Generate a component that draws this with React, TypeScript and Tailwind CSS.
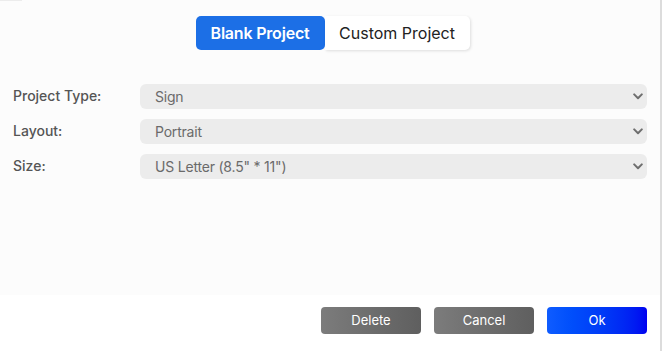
import React from 'react';

const fields = [
    { label: 'Project Type:', value: 'Sign' },
    { label: 'Layout:', value: 'Portrait' },
    { label: 'Size:', value: 'US Letter (8.5" * 11")' },
];

const Chevron = () => (
    <svg width="10" height="7" viewBox="0 0 10 7" className="text-[#6e6e6e]">
        <path d="M1.2 1.4 L5 5.2 L8.8 1.4" fill="none" stroke="currentColor" strokeWidth="2" strokeLinecap="round" strokeLinejoin="round" />
    </svg>
);

export default function App() {
    return (
        <div className="w-[662px] h-[351px] flex bg-white" style={{ fontFamily: 'Inter, "Open Sans", sans-serif' }}>
            <div className="flex-1 flex flex-col">
                <div className="h-[295px] bg-[#fcfcfc] flex flex-col">
                    <div className="h-px w-[22px] bg-[#ececec]" />
                    <div className="flex justify-center pt-[15px] pl-[5px]">
                        <div className="flex">
                            <button className="w-[129px] h-[34px] rounded-[5px] bg-[#1c6fe6] text-white text-[16px] font-semibold tracking-[-0.2px]">
                                Blank Project
                            </button>
                            <button className="w-[145px] h-[34px] rounded-r-[5px] bg-white text-[#222] text-[16px] shadow-[1px_1px_3px_rgba(0,0,0,0.12)]">
                                Custom Project
                            </button>
                        </div>
                    </div>
                    <div className="flex flex-col gap-[10px] mt-[34px] pl-[13px] pr-[13px]">
                        {fields.map((f) => (
                            <div key={f.label} className="flex items-center">
                                <div className="w-[127px] text-[14px] font-medium text-[#555] -mt-[3px]">{f.label}</div>
                                <div className="flex-1 h-[25px] rounded-[6px] bg-[#ececec] flex items-center justify-between pl-[15px] pr-[4px]">
                                    <span className="text-[14px] text-[#6a6a6a] tracking-[-0.2px]">{f.value}</span>
                                    <Chevron />
                                </div>
                            </div>
                        ))}
                    </div>
                </div>
                <div className="flex justify-end gap-[13px] pt-[12px] pr-[13px]">
                    <button className="w-[100px] h-[27px] rounded-[4px] bg-gradient-to-r from-[#7c7c7c] to-[#5f5f5f] text-white text-[13px]">Delete</button>
                    <button className="w-[100px] h-[27px] rounded-[4px] bg-gradient-to-r from-[#7c7c7c] to-[#5f5f5f] text-white text-[13px]">Cancel</button>
                    <button className="w-[100px] h-[27px] rounded-[4px] bg-gradient-to-r from-[#0f5cff] to-[#0000f0] text-white text-[13px]">Ok</button>
                </div>
            </div>
            <div className="w-[2px] bg-[#dcdcdc]" />
        </div>
    );
}
